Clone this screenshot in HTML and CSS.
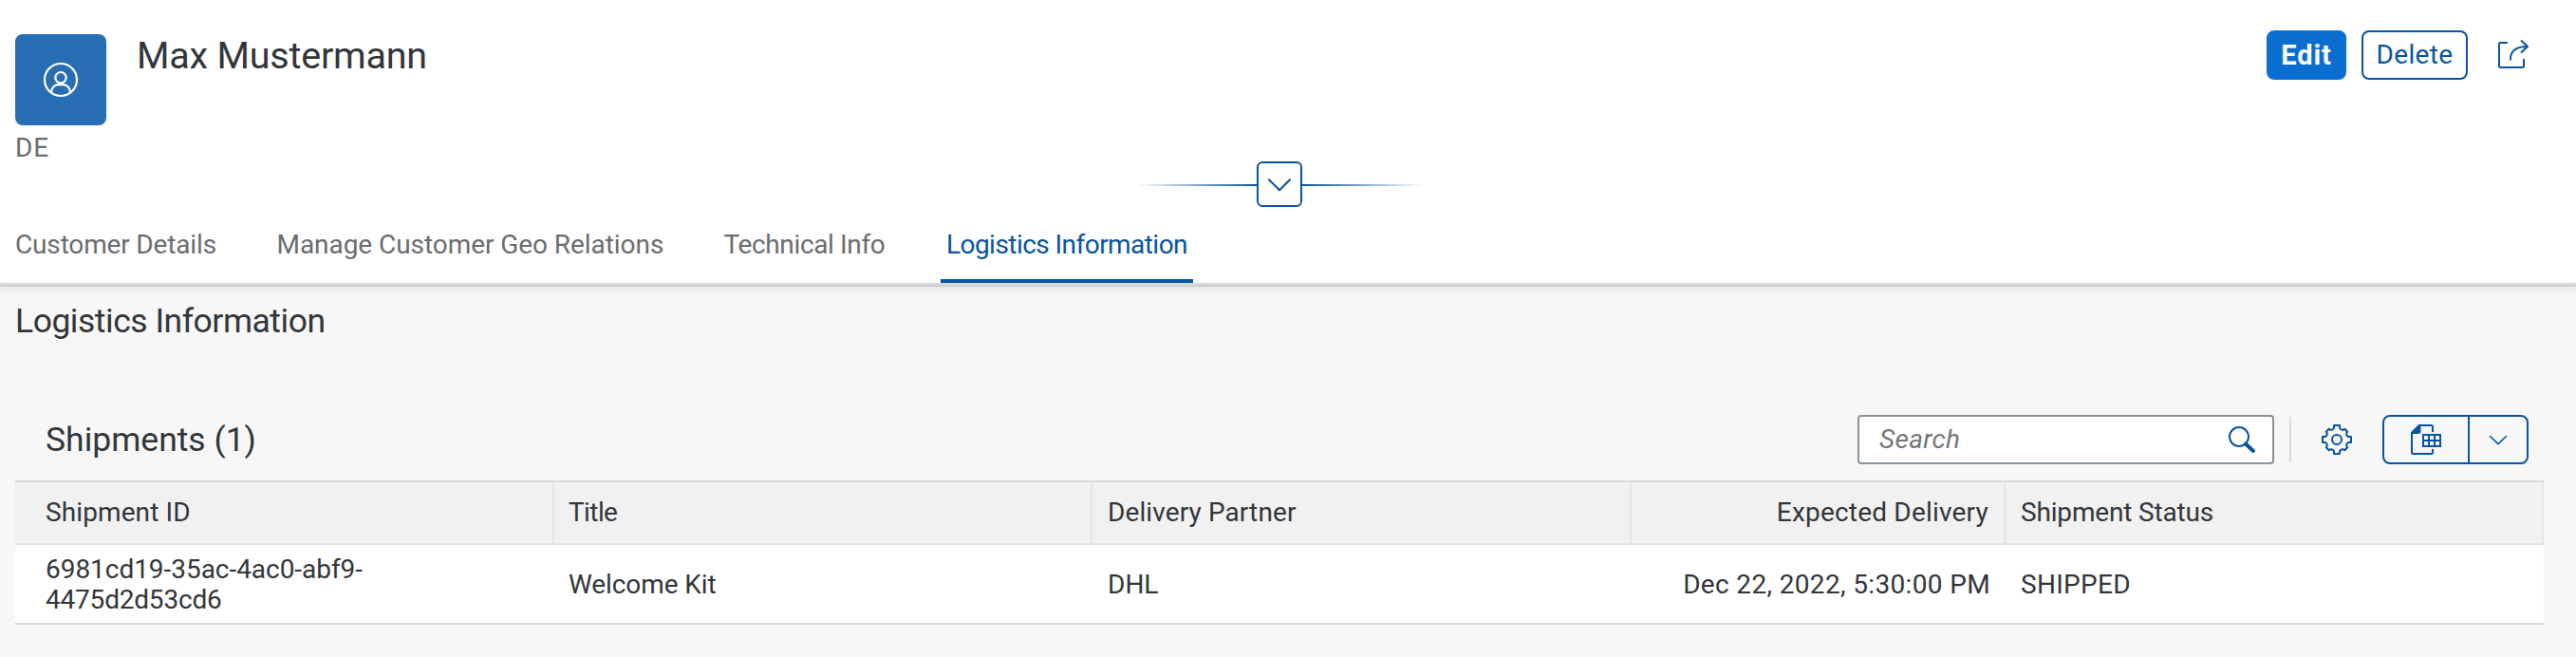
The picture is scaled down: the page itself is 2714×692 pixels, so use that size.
FILE: index.html
```html
<!DOCTYPE html>
<html lang="en">
<head>
<meta charset="utf-8">
<title>Max Mustermann</title>
<link rel="stylesheet" href="styles.css">
</head>
<body>
<header class="page-header">
  <div class="title-row">
    <div class="avatar">
      <svg width="40" height="40" viewBox="0 0 40 40" fill="none" stroke="#fff" stroke-width="2.2">
        <circle cx="20" cy="20" r="17"/>
        <circle cx="20" cy="17.7" r="5.7"/>
        <path d="M10 32.8c.6-5 4-7.6 8-7.6h4c4 0 7.400 2.600 8 7.600"/>
      </svg>
    </div>
    <h1 class="name">Max Mustermann</h1>
    <div class="actions">
      <button class="btn btn-primary">Edit</button>
      <button class="btn btn-outline">Delete</button>
      <svg class="share" width="32" height="32" viewBox="0 0 32 32" fill="none" stroke="#0854a0" stroke-width="2">
        <path d="M10 4H2.500Q1 4 1 5.500V28.500Q1 30 2.500 30H25.500Q27 30 27 28.500V21"/>
        <path d="M13 22.500C12.500 13 18 8 31 8M24 1.500L31 8L24 14.500"/>
      </svg>
    </div>
  </div>
  <div class="country">DE</div>
  <div class="expander">
    <span class="ray ray-left"></span>
    <button class="expand-btn">
      <svg width="24" height="14" viewBox="0 0 24 14" fill="none" stroke="#0854a0" stroke-width="2" stroke-linecap="round" stroke-linejoin="round"><path d="M1 1.200L12 12.200L23 1.200"/></svg>
    </button>
    <span class="ray ray-right"></span>
  </div>
  <nav class="tabs">
    <a class="tab tab-details">Customer Details</a>
    <a class="tab tab-geo">Manage Customer Geo Relations</a>
    <a class="tab tab-tech">Technical Info</a>
    <a class="tab tab-logistics selected">Logistics Information</a>
  </nav>
</header>
<main class="content">
  <h2 class="section-title">Logistics Information</h2>
  <div class="toolbar">
    <h3 class="table-title">Shipments (1)</h3>
    <div class="search">
      <span class="placeholder">Search</span>
      <svg width="30" height="30" viewBox="0 0 30 30" fill="none" stroke="#0854a0"><circle cx="12" cy="12" r="10" stroke-width="2"/><path d="M19 19.500L27 27" stroke-width="4" stroke-linecap="round"/></svg>
    </div>
    <span class="separator"></span>
    <svg class="gear" width="32" height="32" viewBox="0 0 32 32" fill="none" stroke="#0854a0" stroke-width="2" stroke-linejoin="round">
      <path d="M13 1H19V4C20.500 6 22.500 6.500 24.300 4.800L27.200 7.700C25.500 9.500 26 11.500 28 13H31V19H28C26 20.500 25.500 22.500 27.200 24.300L24.300 27.200C22.500 25.500 20.500 26 19 28V31H13V28C11.500 26 9.500 25.500 7.700 27.200L4.800 24.300C6.500 22.500 6 20.500 4 19H1V13H4C6 11.500 6.500 9.500 4.800 7.700L7.700 4.800C9.500 6.500 11.500 6 13 4Z"/>
      <circle cx="16" cy="16" r="5"/>
    </svg>
    <div class="split-btn">
      <button class="split-main">
        <svg width="32" height="32" viewBox="0 0 32 32" fill="none" stroke="#0854a0" stroke-width="2">
          <path d="M23 8V2.500Q23 1 21.500 1H9L1 9V29.500Q1 31 2.500 31H21.500Q23 31 23 29.500V26"/>
          <path d="M9 1L1 9H8L9.500 8V1z" fill="#0854a0"/>
          <path d="M13 11H31V23H13zM13 17H31M19 11V23M25 11V23"/>
        </svg>
      </button>
      <button class="split-arrow">
        <svg width="20" height="12" viewBox="0 0 20 12" fill="none" stroke="#0854a0" stroke-width="1.600" stroke-linecap="round" stroke-linejoin="round"><path d="M1.500 1.500L10 9.700L18.500 1.500"/></svg>
      </button>
    </div>
  </div>
  <div class="table">
    <div class="row head">
      <div class="cell t-id">Shipment ID</div>
      <div class="cell t-title">Title</div>
      <div class="cell t-partner">Delivery Partner</div>
      <div class="cell right t-expected">Expected Delivery</div>
      <div class="cell t-status">Shipment Status</div>
    </div>
    <div class="row body">
      <div class="cell"><div class="id"><div>6981cd19-35ac-4ac0-abf9-</div><div class="id-rest">4475d2d53cd6</div></div></div>
      <div class="cell t-kit">Welcome Kit</div>
      <div class="cell">DHL</div>
      <div class="cell right t-date">Dec 22, 2022, 5:30:00 PM</div>
      <div class="cell t-shipped">SHIPPED</div>
    </div>
  </div>
</main>
</body>
</html>
```
FILE: styles.css
```css
* { box-sizing: border-box; }
body {
  margin: 0;
  height: 692px;
  overflow: hidden;
  background: #f7f7f7;
  color: #32363a;
  font: 28px/32px Roboto, "Liberation Sans", sans-serif;
}
h1, h2, h3 { margin: 0; font-weight: 400; }
button { padding: 0; font: inherit; background: none; border: 0; }
svg { display: block; flex: none; }

/* Object header */
.page-header {
  position: relative;
  height: 298px;
  display: flex;
  flex-direction: column;
  background: #fff;
  box-shadow: 0 2px 0 #d9d9d9, 0 4px 0 #cfcfcf, 0 5px 8px 2px rgba(0, 0, 0, .09);
}
.title-row { display: flex; height: 132px; padding: 36px 50px 0 16px; }
.avatar {
  width: 96px;
  height: 96px;
  border-radius: 8px;
  background: #286eb4;
  display: grid;
  place-items: center;
}
.name { margin: 0 auto 0 32px; font-size: 39.5px; line-height: 45px; letter-spacing: -.22px; }
.actions { display: flex; align-items: center; height: 52px; margin-top: -4px; }
.btn { height: 52px; border-radius: 8px; line-height: 48px; border: 2px solid #0854a0; }
.btn-primary {
  width: 84px;
  background: #0a6ed1;
  border-color: #0a6ed1;
  color: #fff;
  font-size: 29px;
  font-weight: 700;
  letter-spacing: .9px;
}
.btn-outline { width: 112px; margin-left: 16px; color: #0854a0; letter-spacing: .35px; background: #fff; }
.share { margin: 0 0 2px 32px; }
.country { height: 38px; padding: 8px 16px 0; line-height: 32px; color: #6a6d70; letter-spacing: .8px; }
.expander { display: flex; align-items: center; justify-content: flex-end; height: 48px; padding-right: 1214px; }
.ray { width: 128px; height: 2px; margin-top: 2px; }
.ray-left { background: linear-gradient(to left, #0854a0, transparent); }
.ray-right { background: linear-gradient(to right, #0854a0, transparent); }
.expand-btn {
  width: 48px;
  height: 48px;
  border: 2px solid #0854a0;
  border-radius: 6px;
  display: grid;
  place-items: center;
  background: #fff;
  padding-top: 2px;
}
.tabs { display: flex; height: 80px; padding-left: 10px; }
.tab { height: 80px; padding: 24px 6px 0; color: #6a6d70; border-bottom: 4px solid transparent; white-space: nowrap; }
.tab-details { width: 275.500px; letter-spacing: -.16px; }
.tab-geo { width: 471px; letter-spacing: -.06px; }
.tab-tech { width: 234.500px; letter-spacing: -.36px; }
.tab-logistics { width: 266px; letter-spacing: -.55px; }
.selected { color: #0854a0; background: linear-gradient(#0854a0, #0854a0) bottom / 100% 4px no-repeat border-box; border-radius: 3px 3px 0 0; border-bottom: 0; }

/* Section */
.content { padding: 18px 34px 0 16px; }
.section-title { height: 44px; line-height: 44px; font-size: 35.500px; letter-spacing: -.48px; }
.toolbar { display: flex; align-items: center; height: 88px; margin-top: 59px; padding: 0 16px 0 32px; }
.table-title { margin-right: auto; line-height: 44px; font-size: 35.500px; letter-spacing: 0; }
.search {
  width: 439px;
  height: 52px;
  padding: 0 17px 0 21px;
  display: flex;
  align-items: center;
  justify-content: space-between;
  border: 2px solid #89919a;
  border-radius: 4px;
  background: #fff;
}
.placeholder { font-style: italic; color: #74777a; letter-spacing: .3px; }
.separator { width: 2px; height: 48px; margin: 0 32px 0 16px; background: #d9d9d9; }
.gear { margin-right: 32px; }
.split-btn { display: flex; width: 154px; height: 52px; border: 2px solid #0854a0; border-radius: 8px; }
.split-main { width: 90px; display: grid; place-items: center; border-right: 2px solid #0854a0; }
.split-arrow { flex: 1; display: grid; place-items: center; padding-top: 1px; }

/* Shipments table */
.table { border-top: 2px solid #d9d9d9; border-bottom: 2px solid #d9d9d9; margin-top: -1px; }
.row { display: grid; grid-template-columns: 568px 567px 568px 394px 567px; }
.cell { display: flex; align-items: center; padding: 0 16px; white-space: nowrap; }
.cell:first-child { padding-left: 32px; }
.right { justify-content: flex-end; }
.head { height: 66px; background: #f1f1f1; border-bottom: 2px solid #e4e4e4; }
.head .cell { border-right: 2px solid #e5e5e5; padding-bottom: 1px; }
.body { height: 82px; background: #fff; }
.body .cell { padding-top: 1px; }
.cell.t-title, .cell.t-kit { padding-left: 15px; }
.t-id { letter-spacing: .1px; }
.t-title { letter-spacing: -.6px; }
.t-partner { letter-spacing: .1px; }
.t-expected { letter-spacing: .2px; }
.t-status { letter-spacing: -.17px; }
.t-kit { letter-spacing: -.1px; }
.t-date { letter-spacing: .35px; }
.t-shipped { letter-spacing: .3px; }
.id { letter-spacing: -.04px; }
.id-rest { letter-spacing: -.2px; }
```
